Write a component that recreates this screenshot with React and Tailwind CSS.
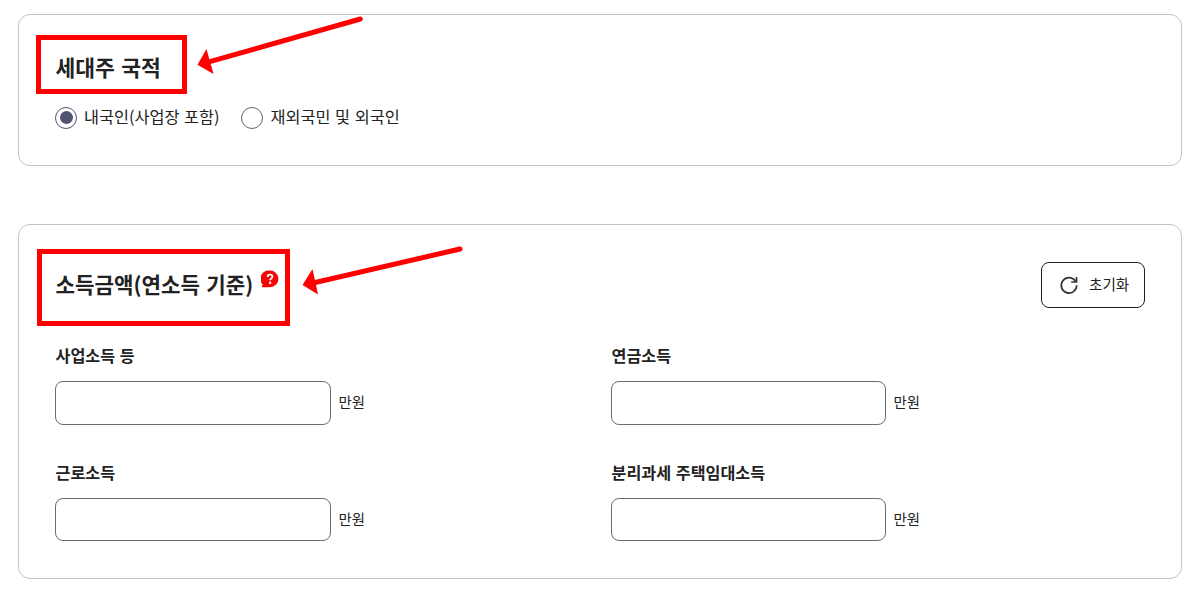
import React from 'react';

const incomeFields = [
  { id: 'business', label: '사업소득 등', box: 'w-[276px] h-11' },
  { id: 'pension', label: '연금소득', box: 'w-[275px] h-11' },
  { id: 'labor', label: '근로소득', box: 'w-[276px] h-[43px]' },
  { id: 'rental', label: '분리과세 주택임대소득', box: 'w-[275px] h-[43px]' },
];

const RadioOption = ({ label, checked }) => (
  <label className="flex items-center">
    <span
      className={`flex h-[22px] w-[22px] items-center justify-center rounded-full border ${
        checked ? 'border-[#50536d]' : 'border-[#66666a]'
      }`}
    >
      {checked && <span className="-mt-px h-[13px] w-[13px] rounded-full bg-[#50536d]" />}
    </span>
    <span className="ml-[7px] -mt-1 text-[16.3px] leading-[22px] [word-spacing:1px] whitespace-nowrap">{label}</span>
  </label>
);

const IncomeField = ({ id, label, box }) => (
  <div>
    <label
      htmlFor={id}
      className="-mt-px block h-[26px] pl-[0.5px] text-[16.2px] leading-6 font-bold [word-spacing:1px]"
    >
      {label}
    </label>
    <div className="mt-3 flex items-center">
      <input id={id} type="text" className={`rounded-lg border border-[#6d6d6d] bg-white px-3 ${box}`} />
      <span className="-mt-0.5 ml-[7.5px] text-[14.4px] leading-5">만원</span>
    </div>
  </div>
);

// Speech-bubble help mark next to the section title
const HelpIcon = () => (
  <svg width="18" height="18" viewBox="0 0 18 18">
    <path d="M9 .5a8.4 8.4 0 1 1 0 16.8H1.2c-.6 0-.7-.4-.4-.8l1-1.8A8.4 8.4 0 0 1 9 .5Z" fill="#f30505" />
    <path
      d="M6.6 7c0-1.4 1-2.3 2.4-2.3s2.4.8 2.4 2.1c0 1.6-2.3 1.6-2.3 3.5"
      fill="none"
      stroke="#fff"
      strokeWidth="1.8"
    />
    <circle cx="9.1" cy="12.8" r="1.2" fill="#fff" />
  </svg>
);

const ResetIcon = () => (
  <svg width="20" height="20" viewBox="0 0 20 20" fill="none" stroke="#333" strokeWidth="1.7">
    <path d="M16.6 6.4A7.7 7.7 0 1 0 17.7 10.3" />
    <path d="M17.5 2v5h-5.3" />
  </svg>
);

const Arrow = ({ className, width, height, line, head }) => (
  <svg className={`pointer-events-none absolute ${className}`} width={width} height={height}>
    <path d={line} stroke="#ff0000" strokeWidth="5" strokeLinecap="round" />
    <path d={head} fill="#ff0000" />
  </svg>
);

export default function App() {
  return (
    <main className="h-[592px] w-[1196px] bg-white pt-[14px] pl-[18px] font-['Noto_Sans_CJK_KR',sans-serif] text-[#222]">
      <section className="relative h-[152px] w-[1164px] rounded-xl border border-[#c4c4c4] pt-9 pl-9">
        <h2 className="h-[56px] pl-[0.5px] text-[21.5px] leading-8 font-bold [word-spacing:1.5px]">세대주 국적</h2>
        <div className="flex gap-[22px]">
          <RadioOption label="내국인(사업장 포함)" checked />
          <RadioOption label="재외국민 및 외국인" />
        </div>

        <div className="pointer-events-none absolute top-5 left-[17px] h-[59px] w-[151px] border-5 border-[#ff0000]" />
        <Arrow
          className="top-0 left-[174px]"
          width={180}
          height={70}
          line="M15 47.2 L167.3 4"
          head="M4.5 49.8 L13.5 34 L20.5 59 Z"
        />
      </section>

      <section className="relative mt-[58px] h-[355px] w-[1164px] rounded-xl border border-[#c4c4c4] pt-[37px] pr-9 pl-9">
        <div className="flex h-[46px] justify-between">
          <h2 className="flex pl-[0.5px] text-[21.2px] leading-[44px] font-bold [word-spacing:1.5px]">
            소득금액(연소득 기준)
            <span className="mt-[7.5px] ml-[7.5px]">
              <HelpIcon />
            </span>
          </h2>
          <button
            type="button"
            className="flex h-[46px] w-[104px] items-center rounded-lg border border-[#1e1e1e] pl-[17px]"
          >
            <ResetIcon />
            <span className="-mt-0.5 ml-2.5 text-[14.6px] leading-5">초기화</span>
          </button>
        </div>
        <div className="mt-9 grid grid-cols-[556px_1fr] gap-y-9">
          {incomeFields.map((field) => (
            <IncomeField key={field.id} {...field} />
          ))}
        </div>

        <div className="pointer-events-none absolute top-6 left-[18px] h-[77px] w-[253px] border-5 border-[#ff0000]" />
        <Arrow
          className="top-[15px] left-[280px]"
          width={180}
          height={70}
          line="M14 43 L161 9"
          head="M3.5 45 L13.5 29 L19 54.5 Z"
        />
      </section>
    </main>
  );
}
